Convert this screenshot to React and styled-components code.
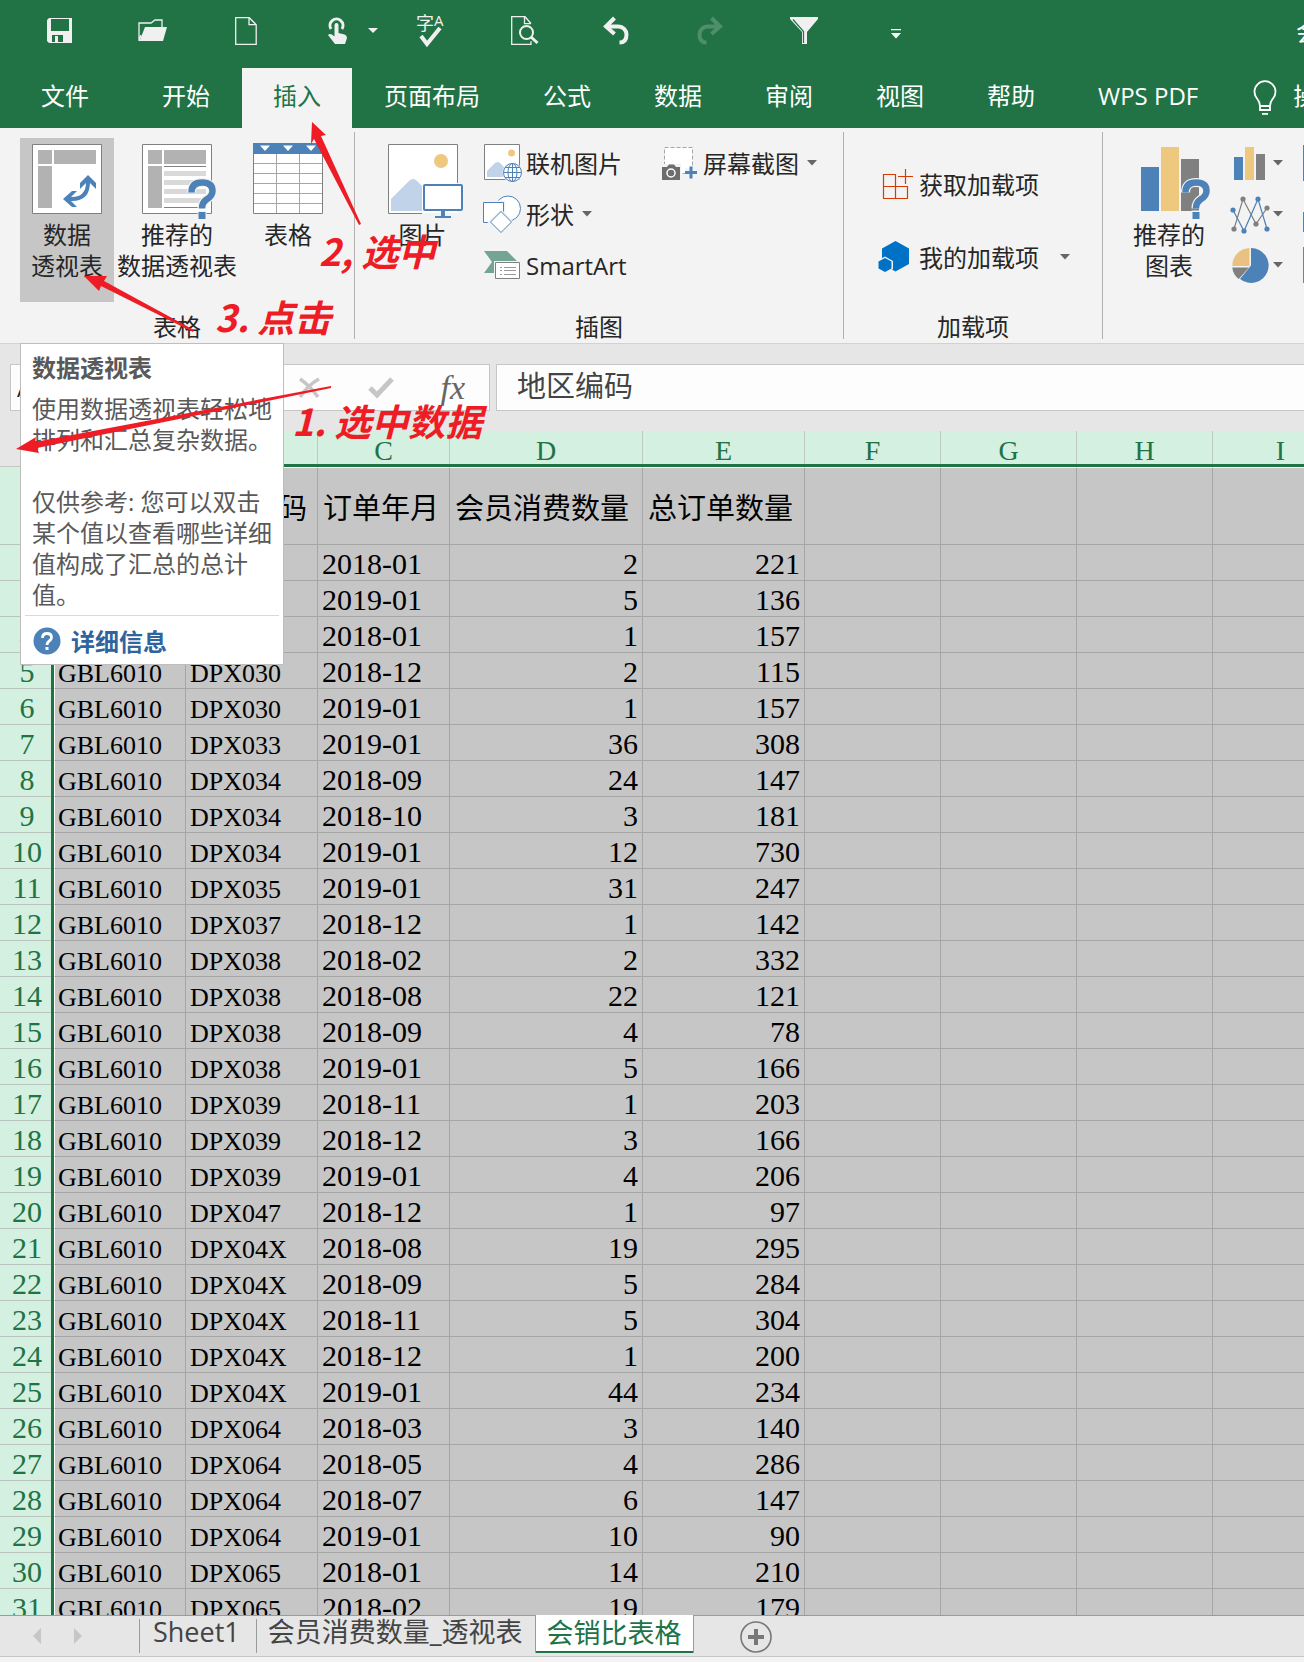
import React from "react";
import styled, { createGlobalStyle, css } from "styled-components";

const green = "#217346";
const blue = "#4d82b8";
const grey = "#808080";
const sand = "#eec87f";
const red = "#ee1c24";
const uiFont = `"Open Sans", "Noto Sans CJK SC", sans-serif`;
const cellFont = `"Liberation Serif", "Noto Sans CJK SC", serif`;

const GlobalStyle = createGlobalStyle`
  *, *::before, *::after { box-sizing: border-box; }
  body { margin: 0; overflow: hidden; background: #f3f3f3; }
  button, input { font: inherit; color: inherit; }
  button { border: 0; padding: 0; background: none; cursor: pointer; }
  svg { display: block; flex: none; overflow: visible; }
`;

const Window = styled.div`
  position: relative;
  display: flex;
  flex-direction: column;
  height: 100vh;
  overflow: hidden;
  font-family: ${uiFont};
  font-size: 24px;
  line-height: 31px;
  color: #262626;
  white-space: nowrap;
`;

/* ---------- title bar and tabs ---------- */

const TitleBar = styled.header`
  display: flex;
  align-items: center;
  flex: none;
  height: 68px;
  padding-left: 13px;
  background: ${green};
  color: #fff;
  overflow: hidden;
`;

const QuickButton = styled.button`
  display: flex;
  justify-content: center;
  flex: none;
  width: 93px;
  padding-bottom: 6px;
  opacity: ${(p) => (p.$dim ? 0.22 : 1)};
`;

const DocTitle = styled.span`
  flex: 1 0 auto;
  padding: 0 0 6px 353px;
`;

const TabBar = styled.nav`
  display: flex;
  flex: none;
  gap: 1px;
  height: 60px;
  background: ${green};
  overflow: hidden;
`;

const Tab = styled.button`
  flex: none;
  padding: 0 ${(p) => (p.$file ? 41 : 31)}px 5px;
  color: ${(p) => (p.$active ? green : "#fff")};
  background: ${(p) => (p.$active ? "#f3f3f3" : "transparent")};
`;

const TellMe = styled.button`
  display: flex;
  align-items: center;
  flex: none;
  gap: 16px;
  padding: 0 0 0 23px;
  color: #fff;
`;

const TellMeText = styled.span`
  padding-bottom: 5px;
`;

/* ---------- ribbon ---------- */

const Ribbon = styled.section`
  position: relative;
  z-index: 2;
  display: flex;
  flex: none;
  height: 216px;
  background: #f3f3f3;
  border-bottom: 1px solid #d2d2d2;
`;

const RibbonClip = styled.div`
  display: flex;
  width: 100%;
  overflow: hidden;
`;

const Group = styled.div`
  display: flex;
  flex-direction: column;
  flex: none;
  padding-top: 10px;
`;

const GroupBody = styled.div`
  display: flex;
  align-items: flex-start;
  flex: 1;
  gap: ${(p) => p.$gap}px;
  padding: 0 18px 0 ${(p) => p.$left}px;
`;

const GroupLabel = styled.div`
  height: 32px;
  text-align: center;
`;

const Divider = styled.div`
  flex: none;
  width: 1px;
  margin: 4px 0;
  background: #b1b1b1;
`;

const BigButton = styled.button`
  display: flex;
  flex-direction: column;
  align-items: center;
  flex: none;
  width: ${(p) => p.$width}px;
  height: 164px;
  padding-top: 5px;
  background: ${(p) => (p.$active ? "#c6c6c6" : "transparent")};
`;

const Stack = styled.div`
  display: flex;
  flex-direction: column;
  align-items: flex-start;
  flex: none;
  width: ${(p) => p.$width}px;
  padding-top: ${(p) => p.$top || 0}px;
`;

const SmallButton = styled.button`
  display: flex;
  align-items: center;
  gap: ${(p) => p.$gap || 4}px;
  height: ${(p) => p.$height || 51}px;
  padding-bottom: 1px;
`;

const CaretBox = styled.span`
  margin-left: ${(p) => p.$space}px;
`;

/* ---------- tooltip ---------- */

const Tip = styled.aside`
  position: absolute;
  left: 20px;
  top: 100%;
  width: 264px;
  padding: 8px 4px 4px;
  background: #fff;
  border: 1px solid #bebebe;
  color: #595959;
`;

const TipTitle = styled.h2`
  margin: 0 0 10px;
  padding: 0 7px;
  font-size: 24px;
  line-height: 31px;
`;

const TipText = styled.p`
  margin: 0 0 ${(p) => (p.$last ? 5 : 31)}px;
  padding: 0 7px;
`;

const TipLink = styled.a`
  display: flex;
  align-items: center;
  gap: 10px;
  height: 45px;
  padding: 6px 8px 0;
  border-top: 1px solid #d9d9d9;
  color: #2f659c;
  font-weight: 700;
  text-decoration: none;
`;

/* ---------- formula bar ---------- */

const FormulaBar = styled.div`
  display: flex;
  flex: none;
  height: 87px;
  padding: 20px 0 20px 10px;
  background: #e6e6e6;
`;

const boxed = css`
  background: #fdfdfd;
  border: 1px solid #c6c6c6;
`;

const NameBox = styled.input`
  ${boxed}
  flex: none;
  width: 180px;
  padding: 0 6px;
  font-size: 24px;
  border-radius: 0;
`;

const FormulaTools = styled.div`
  ${boxed}
  display: flex;
  align-items: center;
  justify-content: flex-end;
  flex: none;
  gap: 46px;
  width: 294px;
  margin: 0 6px 0 6px;
  padding-right: 24px;
`;

const FxButton = styled.button`
  font-family: "Liberation Serif", serif;
  font-style: italic;
  font-size: 34px;
  line-height: 36px;
  color: #666;
`;

const FormulaInput = styled.input`
  ${boxed}
  flex: 1;
  min-width: 0;
  padding: 0 20px 4px;
  font-size: 29px;
  color: #444;
  border-right: 0;
  border-radius: 0;
`;

/* ---------- sheet ---------- */

const SheetArea = styled.main`
  flex: 1;
  min-height: 0;
  overflow: hidden;
  background: #c6c6c6;
`;

const Grid = styled.table`
  table-layout: fixed;
  width: 1349px;
  border-collapse: separate;
  border-spacing: 0;
  font-family: ${cellFont};
  font-size: 30px;
  line-height: 28px;
  color: #000;
`;

const Col = styled.col`
  width: ${(p) => p.$width}px;
`;

const Corner = styled.td`
  height: 36px;
  padding: 0;
  background: #e6e6e6;
  border-bottom: 1px solid #c6c6c6;
`;

const ColHead = styled.th`
  padding: 0;
  font-weight: 400;
  font-size: 28px;
  color: ${green};
  background: #d3f0e0;
  border-bottom: 3px solid ${green};
`;

const ColLetter = styled.div`
  height: 33px;
  padding-top: 6px;
  border-right: 1px solid #c0c8c4;
`;

const RowHead = styled.th`
  padding: 0;
  font-weight: 400;
  vertical-align: top;
  color: ${green};
  background: #d3f0e0;
  border-right: 3px solid ${green};
`;

const RowNumber = styled.div`
  height: ${(p) => (p.$tall ? 78 : 36)}px;
  padding-left: 3px;
  padding-top: ${(p) => (p.$tall ? 25 : 5)}px;
  border-bottom: 1px solid #b9c4be;
`;

const Cell = styled.td`
  height: 36px;
  padding: 5px 4px 0;
  vertical-align: baseline;
  text-align: ${(p) => (p.$number ? "right" : "left")};
  font-size: ${(p) => (p.$code ? 26 : 30)}px;
  border-right: 1px solid #a6a6a6;
  border-bottom: 1px solid #a6a6a6;
  ${(p) => p.$first && "border-left: 1px solid #fff; padding-left: 3px;"}
`;

const HeadCell = styled(Cell)`
  height: 78px;
  padding: 5px 5px 0;
  vertical-align: middle;
  font-size: 29px;
  border-top: 1px solid #fff;
`;

/* ---------- sheet tabs ---------- */

const SheetBar = styled.footer`
  flex: none;
  height: 47px;
  padding-bottom: 5px;
  background: #f3f3f3;
`;

const SheetTabs = styled.div`
  display: flex;
  align-items: flex-start;
  height: 42px;
  padding-left: 33px;
  background: #e6e6e6;
  border-top: 1px solid #9b9b9b;
  border-bottom: 1px solid #c6c6c6;
  font-size: 27px;
  color: #444;
`;

const NavButtons = styled.div`
  display: flex;
  gap: 33px;
  width: 106px;
  padding-top: 12px;
`;

const SheetTab = styled.button`
  height: 34px;
  margin-top: 3px;
  padding: 0 ${(p) => (p.$wide ? 12 : 16)}px 9px ${(p) => (p.$wide ? 11 : 13)}px;
  line-height: 25px;
  border-left: 1px solid #9b9b9b;
`;

const ActiveSheet = styled.button`
  height: 38px;
  margin-top: -1px;
  padding: 0 11px 4px;
  color: ${green};
  background: #fff;
  border-right: 1px solid #9b9b9b;
  border-left: 1px solid #9b9b9b;
  box-shadow: inset 0 -2px ${green};
`;

const AddSheet = styled.button`
  margin: 5px 0 0 46px;
`;

/* ---------- handwritten notes over the window ---------- */

const Notes = styled.div`
  position: absolute;
  inset: 0;
  z-index: 3;
  pointer-events: none;
  color: ${red};
`;

const Note = styled.span`
  position: absolute;
  left: ${(p) => p.$x}px;
  top: ${(p) => p.$y}px;
  font-family: "Noto Sans CJK SC", sans-serif;
  font-size: 37px;
  line-height: 44px;
  font-weight: 700;
  font-style: italic;
`;

/* ---------- icons ---------- */

const Caret = ({ color = "#666" }) => (
  <svg width="10" height="6" viewBox="0 0 10 6"><path d="M0 0h10L5 5.5z" fill={color} /></svg>
);

const SaveIcon = () => (
  <svg width="26" height="26" viewBox="0 0 26 26">
    <path fill="#f0f0f0" fillRule="evenodd" d="M2 0h23v25H2L0 23V2zM4 1v12h18V1zM5 17v7h11v-7zM8 18h3v6H8z" />
  </svg>
);
const FolderIcon = () => (
  <svg width="30" height="24" viewBox="0 0 30 24">
    <path d="M1 22V4h12l4-3h7v7M1 22l2-6" fill="none" stroke="#f0f0f0" strokeWidth="1.3" />
    <path d="M7 8h22l-4 14H1.500z" fill="#f0f0f0" />
  </svg>
);
const NewIcon = () => (
  <svg width="22" height="28" viewBox="0 0 22 28">
    <path d="M.7.7h13.500l7 7v19.600H.7zM14 .7v7h7" fill="none" stroke="#f0f0f0" strokeWidth="1.3" />
  </svg>
);
const TouchIcon = () => (
  <svg width="93" height="28" viewBox="0 0 93 28">
    <path d="M39 12a6.500 6.500 0 1 1 11 0" fill="none" stroke="#f0f0f0" strokeWidth="3" />
    <path d="M42.500 8a2 2 0 0 1 4 0v8l6 1.500q2.500.8 2.500 3.500l-2 6H43l-7-9q2-2 4.500 0l2 1.500z" fill="#f0f0f0" />
    <path d="M76 11h10l-5 5z" fill="#f0f0f0" />
  </svg>
);
const SpellIcon = () => (
  <svg width="32" height="34" viewBox="0 0 32 34">
    <text x="0" y="16" fontSize="18" fontFamily="Noto Sans CJK SC, sans-serif" fill="#f0f0f0">字</text>
    <text x="18" y="12" fontSize="15" fontFamily="Open Sans, sans-serif" fill="#f0f0f0">A</text>
    <path d="M5 22l6 8L24 14" fill="none" stroke="#f0f0f0" strokeWidth="4" />
  </svg>
);
const PreviewIcon = () => (
  <svg width="28" height="30" viewBox="0 0 28 30">
    <path d="M20 7.500L14 .7H.7v27.600H20v-3M13.500.7v7H20" fill="none" stroke="#f0f0f0" strokeWidth="1.3" />
    <circle cx="15.500" cy="16.500" r="6.500" fill={green} stroke="#f0f0f0" strokeWidth="2" />
    <path d="M20 21l6.500 6" stroke="#f0f0f0" strokeWidth="3" />
  </svg>
);
const UndoIcon = ({ flip }) => (
  <svg width="28" height="28" viewBox="0 0 28 28">
    <g transform={flip ? "matrix(-1 0 0 1 26 0)" : "translate(-1 0)"} fill="none" stroke="#f0f0f0">
      <path d="M3 9.500h12.500a8 8 0 0 1 8 8q0 8-7 8" strokeWidth="4" />
      <path d="M11.500 1L3 9.500l8.500 7.500" strokeWidth="4" />
    </g>
  </svg>
);
const FilterIcon = () => (
  <svg width="28" height="28" viewBox="0 0 28 28">
    <path d="M0 0h28v2L17 15v12h-5V15L0 2z" fill="#f0f0f0" />
    <path d="M3 2.500l10.500 12V26" fill="none" stroke={green} strokeWidth="1.200" />
  </svg>
);
const MoreIcon = () => (
  <svg width="12" height="4" viewBox="0 0 12 4"><path d="M0 0h10v1.200H0zM0 4h10L5 9.500z" fill="#fff" /></svg>
);
const BulbIcon = () => (
  <svg width="24" height="36" viewBox="0 -3 24 36">
    <path d="M7 23q0-4-3-7.500a10.500 10.500 0 1 1 16 0Q17 19 17 23v4H7zM7 23h10" fill="none" stroke="#fff" strokeWidth="1.800" />
    <path d="M9 30h6v1.800H9z" fill="#fff" />
  </svg>
);

const Question = ({ x = 46, y = 36 }) => (
  <g transform={`translate(${x} ${y})`}>
    <path d="M3.500 13.500q0-10 10.500-10 10.500 0 10.500 8.500 0 5-6 8.500-4.500 3-4.500 9" fill="none" stroke="#f3f3f3" strokeWidth="9" />
    <path d="M3.500 13.500q0-10 10.500-10 10.500 0 10.500 8.500 0 5-6 8.500-4.500 3-4.500 9" fill="none" stroke={blue} strokeWidth="6.500" />
    <path d="M9.500 31.500h9V40h-9z" fill="#f3f3f3" />
    <path d="M10.500 33h7v7h-7z" fill={blue} />
  </g>
);

const PivotIcon = () => (
  <svg width="70" height="76" viewBox="0 0 70 76">
    <path d="M.5 1.500h69v69H.5z" fill="#fff" stroke={grey} />
    <path d="M6 7h14v14H6zM22 7h42v14H22zM6 23h14v42H6z" fill="#b2b2b2" />
    <path d="M35 56h5q16 0 16-17v-4" fill="none" stroke={blue} strokeWidth="4" />
    <path d="M56 32l8 8v6l-8-8-8 8v-6zM31 56l9-8h5l-8 8 8 8h-5z" fill={blue} />
  </svg>
);
const RecPivotIcon = () => (
  <svg width="70" height="76" viewBox="0 0 70 76">
    <path d="M.5 1.500h69v69H.5z" fill="#fff" stroke={grey} />
    <path d="M6 7h14v14H6zM22 7h42v14H22zM6 23h14v42H6z" fill="#b2b2b2" />
    <path d="M22 28h42v5H22zM22 37h42v5H22zM22 46h42v5H22zM22 55h42v5H22z" fill="#d9d9d9" />
    <path d="M22 23.500h42M22 64.500h42" stroke={grey} />
    <Question />
  </svg>
);
const TableIcon = () => (
  <svg width="70" height="76" viewBox="0 0 70 76">
    <path d="M.5 1.500h69v69H.5z" fill="#fff" stroke={grey} />
    <path d="M0 0h70v11H0z" fill={blue} />
    <path d="M7 2.500h10l-5 5.500zM30 2.500h10L35 8zM53 2.500h10L58 8z" fill="#fff" />
    <path d="M1 20.500h68M1 30.500h68M1 40.500h68M1 50.500h68M1 60.500h68M23.500 11v59M46.500 11v59" stroke="#a6a6a6" />
  </svg>
);
const PictureIcon = () => (
  <svg width="70" height="76" viewBox="0 0 70 76">
    <path d="M.5 1.500h69v69H.5z" fill="#fff" stroke={grey} />
    <circle cx="53" cy="18" r="7" fill={sand} />
    <path d="M3 68V56l18-18q4-4 8 0l12 12v18z" fill="#c1d3e8" />
    <path d="M34 40h42v32H34z" fill="#f3f3f3" />
    <path d="M34 40h35v30H34z" fill="#fff" />
    <rect x="36" y="42" width="38" height="25" rx="1" fill="#fff" stroke={blue} strokeWidth="2" />
    <path d="M53 68h4v5h6v2H47v-2h6z" fill={blue} />
  </svg>
);
const OnlinePictureIcon = () => (
  <svg width="39" height="39" viewBox="0 0 39 39">
    <path d="M1.500.5h35v35h-35z" fill="#fff" stroke={grey} />
    <circle cx="28.500" cy="9" r="3.500" fill={sand} />
    <path d="M4 33V27l8-8q2.500-2 5 0l6 6v8z" fill="#c1d3e8" />
    <circle cx="29.500" cy="28.500" r="10" fill="#f3f3f3" />
    <g fill="#fff" stroke={blue}>
      <circle cx="29.500" cy="28.500" r="9" />
      <ellipse cx="29.500" cy="28.500" rx="4.500" ry="9" />
      <path d="M29.500 19.500v18M20.500 28.500h18M22 23.500h15M22 33.500h15" />
    </g>
  </svg>
);
const ShapesIcon = () => (
  <svg width="39" height="39" viewBox="0 0 39 39" fill="#fff" stroke={blue}>
    <circle cx="25" cy="13.500" r="12.500" />
    <path d="M15 6h7v23h-22V6z" stroke="#f3f3f3" fill="#f3f3f3" />
    <path d="M.5 7.500h20v20H.5z" />
    <path d="M18 14.500L30.500 27.500 18 40 5 27.500z" stroke="#f3f3f3" fill="#f3f3f3" />
    <path d="M18 16.500l10.500 10.500L18 37.500 7.500 27z" />
  </svg>
);
const SmartArtIcon = () => (
  <svg width="39" height="30" viewBox="0 0 39 30">
    <path d="M1 1h23l12 12H26v10H1l8-11z" fill="#74a594" />
    <path d="M11 11h28v19H11z" fill="#f3f3f3" />
    <path d="M12.500 12.500h24v16h-24z" fill="#fff" stroke={grey} />
    <path d="M17 17.500h2M21 17.500h12M17 20.500h2M21 20.500h12M17 24.500h2M21 24.500h12" stroke="#999" />
  </svg>
);
const ScreenshotIcon = () => (
  <svg width="38" height="38" viewBox="0 0 38 38">
    <path d="M3.500 3.500h28v26h-28z" fill="#fff" stroke="#a6a6a6" strokeDasharray="4 2" />
    <path d="M0 20h20v16H0zM24 24h12v12H24z" fill="#f3f3f3" />
    <path d="M1 23h5l2-2.500h5l2 2.500h4v13H1z" fill="#6d6d6d" />
    <circle cx="10" cy="29" r="4" fill="none" stroke="#fff" strokeWidth="1.500" />
    <path d="M28.500 22.500h3v4.500H36v3h-4.500v4.500h-3V30H24v-3h4.500z" fill={blue} />
  </svg>
);
const GetAddinsIcon = () => (
  <svg width="36" height="32" viewBox="0 0 36 32">
    <path d="M5.500 6.500h12v12h-12zM5.500 18.500h12v12h-12zM17.500 18.500h12v12h-12zM27.500 1v15M20 8.500h15" fill="none" stroke="#d83b01" strokeWidth="1.200" />
  </svg>
);
const MyAddinsIcon = () => (
  <svg width="36" height="32" viewBox="0 0 36 32">
    <path d="M17.500 0L31 7.500v15.500L17.500 30.500 4 23V7.500z" fill="#0072c6" />
    <path d="M7 15.500l8 4.500v8L7 32l-8-4v-8z" fill="#f3f3f3" />
    <path d="M7 17l6.500 3.500v7L7 31 .5 27.500v-7z" fill="#0072c6" />
  </svg>
);
const RecChartIcon = () => (
  <svg width="64" height="76" viewBox="0 0 64 76">
    <path d="M4 24h18v44H4z" fill={blue} />
    <path d="M24 4h18v64H24z" fill={sand} />
    <path d="M44 16h18v52H44z" fill={grey} />
    <Question x={45} />
  </svg>
);
const BarsIcon = () => (
  <svg width="40" height="36" viewBox="0 0 40 36">
    <path d="M4 12h9v23H4z" fill={blue} />
    <path d="M15 2h9v33h-9z" fill={sand} />
    <path d="M26 9h9v26h-9z" fill={grey} />
  </svg>
);
const ScatterIcon = () => (
  <svg width="40" height="39" viewBox="0 0 40 39">
    <path d="M4 34l9-30 13 25L37 13" fill="none" stroke={grey} strokeWidth="1.200" />
    <path d="M3 15l11 21L28 4l9 30" fill="none" stroke={blue} strokeWidth="1.200" />
    <g fill={grey}><circle cx="4" cy="34" r="2.600" /><circle cx="13" cy="4" r="2.600" /><circle cx="26" cy="29" r="2.600" /><circle cx="37" cy="13" r="2.600" /></g>
    <g fill={blue}><circle cx="3" cy="15" r="2.600" /><circle cx="14" cy="36" r="2.600" /><circle cx="28" cy="4" r="2.600" /><circle cx="37" cy="34" r="2.600" /></g>
  </svg>
);
const PieIcon = () => (
  <svg width="40" height="37" viewBox="0 0 40 37">
    <path d="M21 18.500V1a17.500 17.500 0 1 1-11 31z" fill={blue} />
    <path d="M19.500 19H2.300A17.500 17.500 0 0 1 19.500 1z" fill="#e9c283" />
    <path d="M19 20.500H2.300q.5 7 6.500 11.500z" fill={grey} />
  </svg>
);
const BlockIcon = ({ color, size }) => (
  <svg width="36" height="36" viewBox="0 0 36 36"><path d={`M0 ${36 - size}h10v${size}H0z`} fill={color} /></svg>
);
const HelpIcon = () => (
  <svg width="28" height="28" viewBox="0 0 28 28">
    <circle cx="14" cy="14" r="13.500" fill={blue} />
    <path d="M9.500 11q0-4.500 4.500-4.500t4.500 4q0 2-2.300 3.500-2.200 1.500-2.200 4" fill="none" stroke="#fff" strokeWidth="2.800" />
    <path d="M12.500 20h3v3h-3z" fill="#fff" />
  </svg>
);
const CancelIcon = () => (
  <svg width="24" height="22" viewBox="0 0 24 22"><path d="M2 2q9 6 18 18M21 2Q10 8 2 20" fill="none" stroke="#c6c6c6" strokeWidth="3.500" /></svg>
);
const CheckIcon = () => (
  <svg width="26" height="22" viewBox="0 0 26 22"><path d="M2 11l7 7L24 2" fill="none" stroke="#c6c6c6" strokeWidth="5" /></svg>
);
const Triangle = ({ d }) => (
  <svg width="8" height="16" viewBox="0 0 8 16"><path d={d} fill="#c6c6c6" /></svg>
);
const PlusIcon = () => (
  <svg width="32" height="32" viewBox="0 0 32 32">
    <circle cx="16" cy="16" r="15" fill="none" stroke="#777" strokeWidth="1.600" />
    <path d="M16 8v16M8 16h16" stroke="#777" strokeWidth="4" />
  </svg>
);

/* ---------- data ---------- */

const quick = [
  ["保存", SaveIcon], ["打开", FolderIcon], ["新建", NewIcon], ["触摸/鼠标模式", TouchIcon],
  ["拼写检查", SpellIcon], ["打印预览", PreviewIcon], ["撤消", UndoIcon],
];

const tabs = ["文件", "开始", "插入", "页面布局", "公式", "数据", "审阅", "视图", "帮助", "WPS PDF"];

const columns = [
  ["A", 132], ["B", 132], ["C", 132], ["D", 193], ["E", 162], ["F", 136], ["G", 136], ["H", 136], ["I", 136],
];

const headings = ["地区编码", "门店编码", "订单年月", "会员消费数量", "总订单数量"];

const rows = [
  ["", "", "2018-01", 2, 221],
  ["", "", "2019-01", 5, 136],
  ["", "", "2018-01", 1, 157],
  ["GBL6010", "DPX030", "2018-12", 2, 115],
  ["GBL6010", "DPX030", "2019-01", 1, 157],
  ["GBL6010", "DPX033", "2019-01", 36, 308],
  ["GBL6010", "DPX034", "2018-09", 24, 147],
  ["GBL6010", "DPX034", "2018-10", 3, 181],
  ["GBL6010", "DPX034", "2019-01", 12, 730],
  ["GBL6010", "DPX035", "2019-01", 31, 247],
  ["GBL6010", "DPX037", "2018-12", 1, 142],
  ["GBL6010", "DPX038", "2018-02", 2, 332],
  ["GBL6010", "DPX038", "2018-08", 22, 121],
  ["GBL6010", "DPX038", "2018-09", 4, 78],
  ["GBL6010", "DPX038", "2019-01", 5, 166],
  ["GBL6010", "DPX039", "2018-11", 1, 203],
  ["GBL6010", "DPX039", "2018-12", 3, 166],
  ["GBL6010", "DPX039", "2019-01", 4, 206],
  ["GBL6010", "DPX047", "2018-12", 1, 97],
  ["GBL6010", "DPX04X", "2018-08", 19, 295],
  ["GBL6010", "DPX04X", "2018-09", 5, 284],
  ["GBL6010", "DPX04X", "2018-11", 5, 304],
  ["GBL6010", "DPX04X", "2018-12", 1, 200],
  ["GBL6010", "DPX04X", "2019-01", 44, 234],
  ["GBL6010", "DPX064", "2018-03", 3, 140],
  ["GBL6010", "DPX064", "2018-05", 4, 286],
  ["GBL6010", "DPX064", "2018-07", 6, 147],
  ["GBL6010", "DPX064", "2019-01", 10, 90],
  ["GBL6010", "DPX065", "2018-01", 14, 210],
  ["GBL6010", "DPX065", "2018-02", 19, 179],
];

export default function App() {
  return (
    <Window>
      <GlobalStyle />

      <TitleBar>
        {quick.map(([name, Icon]) => (
          <QuickButton key={name} aria-label={name}><Icon /></QuickButton>
        ))}
        <QuickButton aria-label="恢复" $dim><UndoIcon flip /></QuickButton>
        <QuickButton aria-label="筛选"><FilterIcon /></QuickButton>
        <QuickButton aria-label="自定义快速访问工具栏"><MoreIcon /></QuickButton>
        <DocTitle>会</DocTitle>
      </TitleBar>

      <TabBar>
        {tabs.map((t, i) => (
          <Tab key={t} $file={i === 0} $active={t === "插入"}>{t}</Tab>
        ))}
        <TellMe><BulbIcon /><TellMeText>操</TellMeText></TellMe>
      </TabBar>

      <Ribbon>
        <RibbonClip>
          <Group>
            <GroupBody $left={20} $gap={3}>
              <BigButton $width={94} $active><PivotIcon /><span>数据<br />透视表</span></BigButton>
              <BigButton $width={120}><RecPivotIcon /><span>推荐的<br />数据透视表</span></BigButton>
              <BigButton $width={96}><TableIcon /><span>表格</span></BigButton>
            </GroupBody>
            <GroupLabel>表格</GroupLabel>
          </Group>
          <Divider />
          <Group>
            <GroupBody $left={22} $gap={15}>
              <BigButton $width={91}><PictureIcon /><span>图片</span></BigButton>
              <Stack $width={163}>
                <SmallButton><OnlinePictureIcon />联机图片</SmallButton>
                <SmallButton><ShapesIcon />形状<CaretBox $space={4}><Caret /></CaretBox></SmallButton>
                <SmallButton><SmartArtIcon />SmartArt</SmallButton>
              </Stack>
              <Stack $width={164}>
                <SmallButton><ScreenshotIcon />屏幕截图<CaretBox $space={4}><Caret /></CaretBox></SmallButton>
              </Stack>
            </GroupBody>
            <GroupLabel>插图</GroupLabel>
          </Group>
          <Divider />
          <Group>
            <GroupBody $left={34} $gap={0}>
              <Stack $width={206} $top={10}>
                <SmallButton $height={73} $gap={5}><GetAddinsIcon />获取加载项</SmallButton>
                <SmallButton $height={73} $gap={5}><MyAddinsIcon />我的加载项<CaretBox $space={16}><Caret /></CaretBox></SmallButton>
              </Stack>
            </GroupBody>
            <GroupLabel>加载项</GroupLabel>
          </Group>
          <Divider />
          <Group>
            <GroupBody $left={19} $gap={14}>
              <BigButton $width={94}><RecChartIcon /><span>推荐的<br />图表</span></BigButton>
              <Stack $width={59}>
                <SmallButton aria-label="柱形图" $gap={3}><BarsIcon /><CaretBox $space={0}><Caret /></CaretBox></SmallButton>
                <SmallButton aria-label="散点图" $gap={3}><ScatterIcon /><CaretBox $space={0}><Caret /></CaretBox></SmallButton>
                <SmallButton aria-label="饼图" $gap={3}><PieIcon /><CaretBox $space={0}><Caret /></CaretBox></SmallButton>
              </Stack>
              <Stack $width={36}>
                <SmallButton aria-label="层次结构图"><BlockIcon color={blue} size={36} /></SmallButton>
                <SmallButton aria-label="统计图"><BlockIcon color={blue} size={20} /></SmallButton>
                <SmallButton aria-label="组合图"><BlockIcon color={grey} size={36} /></SmallButton>
              </Stack>
            </GroupBody>
          </Group>
        </RibbonClip>

        <Tip role="tooltip">
          <TipTitle>数据透视表</TipTitle>
          <TipText>使用数据透视表轻松地<br />排列和汇总复杂数据。</TipText>
          <TipText $last>
            仅供参考: 您可以双击<br />某个值以查看哪些详细<br />值构成了汇总的总计<br />值。
          </TipText>
          <TipLink href="#details"><HelpIcon />详细信息</TipLink>
        </Tip>
      </Ribbon>

      <FormulaBar>
        <NameBox aria-label="名称框" defaultValue="A1" />
        <FormulaTools>
          <button aria-label="取消"><CancelIcon /></button>
          <button aria-label="输入"><CheckIcon /></button>
          <FxButton aria-label="插入函数">fx</FxButton>
        </FormulaTools>
        <FormulaInput aria-label="编辑栏" defaultValue="地区编码" />
      </FormulaBar>

      <SheetArea>
        <Grid>
          <colgroup>
            <Col $width={54} />
            {columns.map(([name, width]) => <Col key={name} $width={width} />)}
          </colgroup>
          <thead>
            <tr>
              <Corner />
              {columns.map(([name]) => (
                <ColHead key={name} scope="col"><ColLetter>{name}</ColLetter></ColHead>
              ))}
            </tr>
          </thead>
          <tbody>
            <tr>
              <RowHead scope="row"><RowNumber $tall>1</RowNumber></RowHead>
              {columns.map(([name], c) => (
                <HeadCell key={name} $first={c === 0}>{headings[c]}</HeadCell>
              ))}
            </tr>
            {rows.map((row, r) => (
              <tr key={r}>
                <RowHead scope="row"><RowNumber>{r + 2}</RowNumber></RowHead>
                {columns.map(([name], c) => (
                  <Cell key={name} $first={c === 0} $code={c < 2} $number={c > 2}>{row[c]}</Cell>
                ))}
              </tr>
            ))}
          </tbody>
        </Grid>
      </SheetArea>

      <SheetBar>
        <SheetTabs>
          <NavButtons>
            <button aria-label="上一个工作表"><Triangle d="M8 0v16L0 8z" /></button>
            <button aria-label="下一个工作表"><Triangle d="M0 0v16l8-8z" /></button>
          </NavButtons>
          <SheetTab>Sheet1</SheetTab>
          <SheetTab $wide>会员消费数量_透视表</SheetTab>
          <ActiveSheet>会销比表格</ActiveSheet>
          <AddSheet aria-label="新工作表"><PlusIcon /></AddSheet>
        </SheetTabs>
      </SheetBar>

      <Notes>
        <svg width="500" height="470" viewBox="0 0 500 470" fill={red}>
          <path d="M312 122l14 13-5 1 40 88-2 1-45-86-3 5z" />
          <path d="M84 276l23 0-3 5 90 49-1 2-92-46-2 5z" />
          <path d="M16 449l20-12-1 5 296-56v2L37 448l2 5z" />
        </svg>
        <Note $x={319} $y={228}>2, 选中</Note>
        <Note $x={215} $y={294}>3. 点击</Note>
        <Note $x={292} $y={398}>1. 选中数据</Note>
      </Notes>
    </Window>
  );
}
